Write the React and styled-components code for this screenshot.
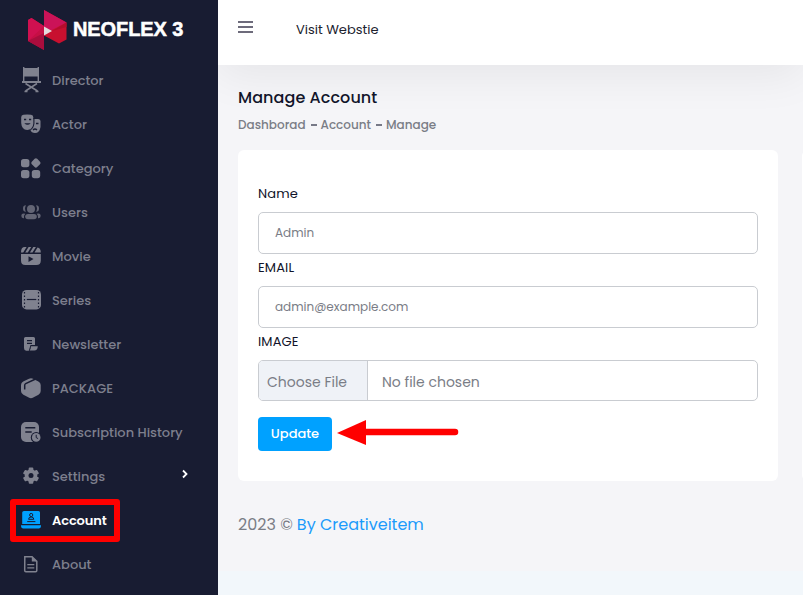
import React from "react";
import styled, { createGlobalStyle } from "styled-components";

const GlobalStyle = createGlobalStyle`
  * { box-sizing: border-box; }
  body {
    margin: 0;
    overflow: hidden;
    background: #f5f5f8;
    color: #7a7d86;
    font-family: Poppins, Inter, sans-serif;
    font-size: 13px;
  }
`;

const Page = styled.div`
  display: grid;
  grid-template-columns: 218px 1fr;
  width: 803px;
  height: 595px;
  overflow: hidden;
`;

const Sidebar = styled.aside`
  z-index: 2;
  background: #181c32;
  overflow: hidden;
`;

const Brand = styled.div`
  display: flex;
  align-items: center;
  height: 58px;
  padding-left: 28px;
`;

const BrandMark = styled.svg`
  flex: none;
  width: 39px;
  height: 42px;
  margin-top: 4px;
`;

const BrandName = styled.span`
  margin-left: 6px;
  color: #fff;
  font: 700 20px/24px "Liberation Sans", Arial, sans-serif;
  letter-spacing: -0.1px;
  -webkit-text-stroke: 0.5px #fff;
  white-space: nowrap;
`;

const Menu = styled.nav`
  display: flex;
  flex-direction: column;
`;

const MenuItem = styled.a`
  position: relative;
  display: flex;
  align-items: center;
  height: 44px;
  padding-left: 19px;
  color: ${(p) => (p.$active ? "#fff" : "#7d7f8d")};
  font-weight: ${(p) => (p.$active ? 600 : 500)};
`;

const MenuIcon = styled.svg`
  flex: none;
  width: 24px;
  height: 28px;
  margin-right: 9px;
  color: ${(p) => (p.$active ? "#00a1ff" : "#80828f")};
  opacity: ${(p) => (p.$dim ? 0.72 : 1)};
`;

const Label = styled.span`
  letter-spacing: ${(p) => p.$spacing || 0}px;
  white-space: nowrap;
`;

const MenuLabel = styled(Label)`
  padding-top: 2px;
`;

const Caret = styled.svg`
  width: 8px;
  height: 10px;
  margin: -5px 29px 0 auto;
`;

const Highlight = styled.span`
  position: absolute;
  left: 10px;
  top: 1px;
  width: 110px;
  height: 43px;
  border: 6px solid #f00;
  border-radius: 3px;
`;

const Main = styled.main`
  display: flex;
  flex-direction: column;
  min-width: 0;
`;

const TopBar = styled.header`
  display: flex;
  flex: none;
  align-items: flex-start;
  gap: 43px;
  height: 65px;
  padding: 21px 20px 0;
  background: #fff;
  box-shadow: 0 10px 45px rgba(0, 0, 0, 0.065);
`;

const Burger = styled.svg`
  width: 15px;
  height: 12px;
`;

const TopLink = styled.a`
  color: #20222e;
  font-size: 13px;
  line-height: 18px;
`;

const Heading = styled.h1`
  margin: 21px 0 0 20px;
  color: #11142a;
  font-size: 16px;
  font-weight: 500;
  line-height: 24px;
  letter-spacing: 0.07px;
`;

const Breadcrumb = styled.div`
  display: flex;
  height: 18px;
  margin: 6px 0 0 20px;
  font-size: 12px;
  font-weight: 500;
  line-height: 18px;
`;

const Divider = styled.span`
  width: 6px;
  height: 2px;
  margin: 8px 4px 0 5px;
  background: #777987;
`;

const Columns = styled.div`
  display: grid;
  grid-template-columns: 540px 540px;
  gap: 24px;
  height: 331px;
  margin: 16px 0 0 20px;
`;

const Card = styled.section`
  padding: 33px 20px 0;
  border-radius: 6px;
  background: #fff;
`;

const Field = styled.div`
  height: 74px;
`;

const FieldLabel = styled.label`
  display: block;
  height: 29px;
  padding-top: 1px;
  color: #11142a;
  line-height: 20px;
  letter-spacing: 0.15px;
`;

const Control = styled.div`
  display: flex;
  align-items: center;
  height: ${(p) => (p.$file ? 41 : 42)}px;
  padding-left: ${(p) => (p.$file ? 0 : 16)}px;
  border: 1px solid #c9ccd1;
  border-radius: 5px;
  font-size: ${(p) => (p.$file ? 14 : 12)}px;
  overflow: hidden;
`;

const FileButton = styled.span`
  display: flex;
  align-items: center;
  align-self: stretch;
  width: 109px;
  margin-right: 14px;
  padding: 3px 0 0 8px;
  border-right: 1px solid #c9ccd1;
  background: #eff2f7;
`;

const FileName = styled.span`
  padding-top: 3px;
`;

const Actions = styled.div`
  display: flex;
  align-items: flex-start;
  gap: 5px;
  padding-top: 12px;
`;

const UpdateButton = styled.button`
  width: 74px;
  height: 34px;
  padding: 0;
  border: 0;
  border-radius: 4px;
  background: #00a1ff;
  color: #fff;
  font: 500 13px Poppins, Inter, sans-serif;
`;

const Arrow = styled.svg`
  width: 122px;
  height: 34px;
`;

const Footer = styled.footer`
  display: flex;
  gap: 4px;
  height: 90px;
  padding: 32px 0 0 20px;
  font-size: 16px;
  line-height: 23px;
  flex: none;
`;

const FooterLink = styled.a`
  color: #1c9bfb;
`;

const BottomBand = styled.div`
  flex: 1;
  background: #f2f7fb;
`;

const BG = "#181c32";

const icons = {
  director: (
    <>
      <path d="M4 1h1.400v1H18.600V1H20v14H4zM5.400 10.400V15h13.200v-4.600z" fillRule="evenodd" />
      <path d="M3 15h19v2H3z" />
      <path d="M6.500 17.500 18.500 25M18 17.500 6.500 25M5.500 25.400h3M16.500 25.400h3" stroke="currentColor" strokeWidth="1.500" />
    </>
  ),
  actor: (
    <>
      <path d="M13.500 9h5.500q2.500 0 2.500 2.500V17q-1 6-5.500 6-3.500 0-5-3.500z" />
      <path d="M2.200 7.200Q2.200 5 4.500 4.800q3.700-.8 7.500 0 2.300.2 2.300 2.400V13q-.5 6.500-6.100 7Q2.600 19.500 2.200 13z" />
      <path d="M14.900 8v5.500q-.5 5-4.900 7.300" fill="none" stroke={BG} strokeWidth="1.100" />
      <path d="M5 9.500h2.200M10 9.500h2.200M14 20q2-2 4 0M17 13.500h2.500" fill="none" stroke={BG} strokeWidth="1.300" />
      <path d="M5.300 13.200h6.400q-3.200 3.200-6.400 0" fill={BG} />
    </>
  ),
  category: (
    <>
      <rect x="2" y="5" width="8.400" height="8.200" rx="2.600" />
      <rect x="2" y="16" width="8.400" height="8.200" rx="2.600" />
      <rect x="12.800" y="16" width="8.400" height="8.200" rx="2.600" />
      <rect x="13.100" y="5.100" width="7.600" height="7.600" rx="1.800" transform="rotate(45 16.900 8.900)" />
    </>
  ),
  users: (
    <>
      <circle cx="12" cy="10.900" r="4" />
      <path d="M7 7.200q-3 0-3 3.300t3 3.300q-2-3.300 0-6.600M17 7.200q3 0 3 3.300t-3 3.300q2-3.300 0-6.600" />
      <rect x="6.200" y="16" width="11.600" height="5.200" rx="2.800" />
      <path d="M6.300 15.800q-4-.8-4 2t2.700 2.400q-.5-2.800 1.300-4.400M17.700 15.800q4-.8 4 2T19 20.200q.5-2.800-1.300-4.400" />
    </>
  ),
  movie: (
    <>
      <path d="M2 10.400Q2 5 6 5.100h1.600L4.200 10.400zM6.200 10.400 9.600 5.100h2.600L8.800 10.400zM10.900 10.400 14.300 5.100h2.600l-3.400 5.300zM15.500 10.400l3-4.900Q21.800 6 21.800 10.400z" />
      <path d="M2 12h19.800v6.500q0 4.500-4.500 4.500h-11Q2 23 2 18.500zM9.500 14.300v5.600l5-2.800z" fillRule="evenodd" />
    </>
  ),
  series: (
    <>
      <rect x="3" y="4" width="19" height="19.400" rx="4.500" />
      <path d="M7.800 13.500h9.500" stroke={BG} strokeWidth="1.200" />
      <path d="M5.500 6v16M19.500 6v16" stroke={BG} strokeWidth="1.200" strokeDasharray="1.500 2" />
    </>
  ),
  newsletter: (
    <>
      <path d="M6.500 7h8Q16 7 16 8.500V15h-4.500l-1.700 5.800H7.200Q5 20.500 5 18V8.500Q5 7 6.500 7M8 10v1.200h5V10zM8 12.700v1.200h5v-1.200z" fillRule="evenodd" />
      <path d="M12 16.200h6.800q-.3 4.400-3.500 4.400h-4.700q1.200-1 1.400-4.400" />
    </>
  ),
  package: (
    <>
      <path d="M10 4.800q2-1 4 0l5.400 2.700q2.300 1.200 2.300 3.600v6q0 2.500-2.200 3.700l-5.300 2.800q-2.300 1.100-4.500 0l-5.300-2.800Q2 19.600 2 17v-6q0-2.400 2.200-3.500z" />
      <path d="M5.700 15.400v-4.200q0-1 1-1.500L16 5.300" fill="none" stroke={BG} strokeWidth="1.500" />
    </>
  ),
  subscription: (
    <>
      <rect x="2" y="4" width="18" height="20" rx="5" />
      <path d="M6.300 9.800h10M6.300 14h6.400" stroke={BG} strokeWidth="1.500" />
      <circle cx="17.200" cy="19.400" r="5.400" fill={BG} />
      <circle cx="17.200" cy="19.400" r="4.300" />
      <path d="M17.200 16.800v2.800l1.900 1" fill="none" stroke={BG} strokeWidth="1" />
    </>
  ),
  settings: (
    <g transform="translate(12 13.600)">
      <circle r="6.300" />
      {[0, 60, 120].map((a) => (
        <rect key={a} x="-2.300" y="-8.100" width="4.600" height="16.200" rx="1" transform={`rotate(${a})`} />
      ))}
      <circle r="2.500" fill={BG} />
    </g>
  ),
  account: (
    <>
      <path d="M5 5h14.500q1.500 0 1.500 1.500V18H3.200V6.500Q3.200 5 5 5M2 19.200h20v.8q0 2.400-2 2.400H4q-2 0-2-2.400z" />
      <circle cx="12.200" cy="9" r="1.600" fill="none" stroke={BG} strokeWidth="1" />
      <path d="M9.600 13.300q0-2.300 2.600-2.300t2.600 2.300zM8.200 15.600h8.200" fill="none" stroke={BG} strokeWidth="1" />
    </>
  ),
  about: (
    <>
      <path d="M5.800 6.700H13l4.800 4.700v9.200q0 1.200-1.200 1.200H6.900q-1.200 0-1.200-1.200z" fill="none" stroke="currentColor" strokeWidth="1.500" />
      <path d="M12.800 6.200v5.400H18zM8.300 14h7v1.300h-7zM8.300 17.200h7v1.300h-7z" />
    </>
  ),
};

const menu = [
  { icon: "director", text: "Director" },
  { icon: "actor", text: "Actor" },
  { icon: "category", text: "Category" },
  { icon: "users", text: "Users", dim: true },
  { icon: "movie", text: "Movie" },
  { icon: "series", text: "Series" },
  { icon: "newsletter", text: "Newsletter" },
  { icon: "package", text: "PACKAGE" },
  { icon: "subscription", text: "Subscription History" },
  { icon: "settings", text: "Settings", caret: true },
  { icon: "account", text: "Account", active: true, spacing: -0.12 },
  { icon: "about", text: "About" },
];

export default function App() {
  return (
    <>
      <GlobalStyle />
      <Page>
        <Sidebar>
          <Brand>
            <BrandMark viewBox="0 0 39 42">
              <path d="M0 10 3.500 8 16 16v24L0 31z" fill="#c60f45" />
              <path d="M0 10 3.500 8 16 16 0 31z" fill="#d01050" />
              <path d="M0 31 16 23v17z" fill="#a90d3d" />
              <path d="M16 0 38.500 12.500v17L31 33.500 16 25.500z" fill="#c8102f" />
              <path d="M16 0 38.500 12.500 16 24z" fill="#cb1358" />
              <path d="M38.500 12.500V17L24 21z" fill="#b40d2c" />
              <path d="M16 16.500 24 21 16 25.500z" fill="#e3dadc" />
            </BrandMark>
            <BrandName>NEOFLEX 3</BrandName>
          </Brand>
          <Menu>
            {menu.map((m) => (
              <MenuItem key={m.text} $active={m.active}>
                <MenuIcon viewBox="0 0 24 28" fill="currentColor" $active={m.active} $dim={m.dim}>
                  {icons[m.icon]}
                </MenuIcon>
                <MenuLabel $spacing={m.spacing}>{m.text}</MenuLabel>
                {m.caret && (
                  <Caret viewBox="0 0 8 10">
                    <path d="M2 1.500 5.500 5 2 8.500" fill="none" stroke="#fff" strokeWidth="1.800" />
                  </Caret>
                )}
                {m.active && <Highlight />}
              </MenuItem>
            ))}
          </Menu>
        </Sidebar>
        <Main>
          <TopBar>
            <Burger viewBox="0 0 15 12">
              <path d="M0 1h15M0 6h15M0 11h15" stroke="#6d6b7b" strokeWidth="2" />
            </Burger>
            <TopLink>Visit Webstie</TopLink>
          </TopBar>
          <Heading>Manage Account</Heading>
          <Breadcrumb>
            <Label>Dashborad</Label>
            <Divider />
            <Label>Account</Label>
            <Divider />
            <Label>Manage</Label>
          </Breadcrumb>
          <Columns>
            <Card>
              <Field>
                <FieldLabel>Name</FieldLabel>
                <Control><Label>Admin</Label></Control>
              </Field>
              <Field>
                <FieldLabel>EMAIL</FieldLabel>
                <Control><Label>admin@example.com</Label></Control>
              </Field>
              <Field>
                <FieldLabel>IMAGE</FieldLabel>
                <Control $file>
                  <FileButton><Label>Choose File</Label></FileButton>
                  <FileName><Label>No file chosen</Label></FileName>
                </Control>
              </Field>
              <Actions>
                <UpdateButton><Label>Update</Label></UpdateButton>
                <Arrow viewBox="0 0 122 34">
                  <path d="M29 15h89" stroke="#f00" strokeWidth="6.500" strokeLinecap="round" />
                  <path d="M0 16 29 3v25z" fill="#f00" />
                </Arrow>
              </Actions>
            </Card>
            <Card />
          </Columns>
          <Footer>
            <Label>2023 ©</Label>
            <FooterLink><Label>By Creativeitem</Label></FooterLink>
          </Footer>
          <BottomBand />
        </Main>
      </Page>
    </>
  );
}
